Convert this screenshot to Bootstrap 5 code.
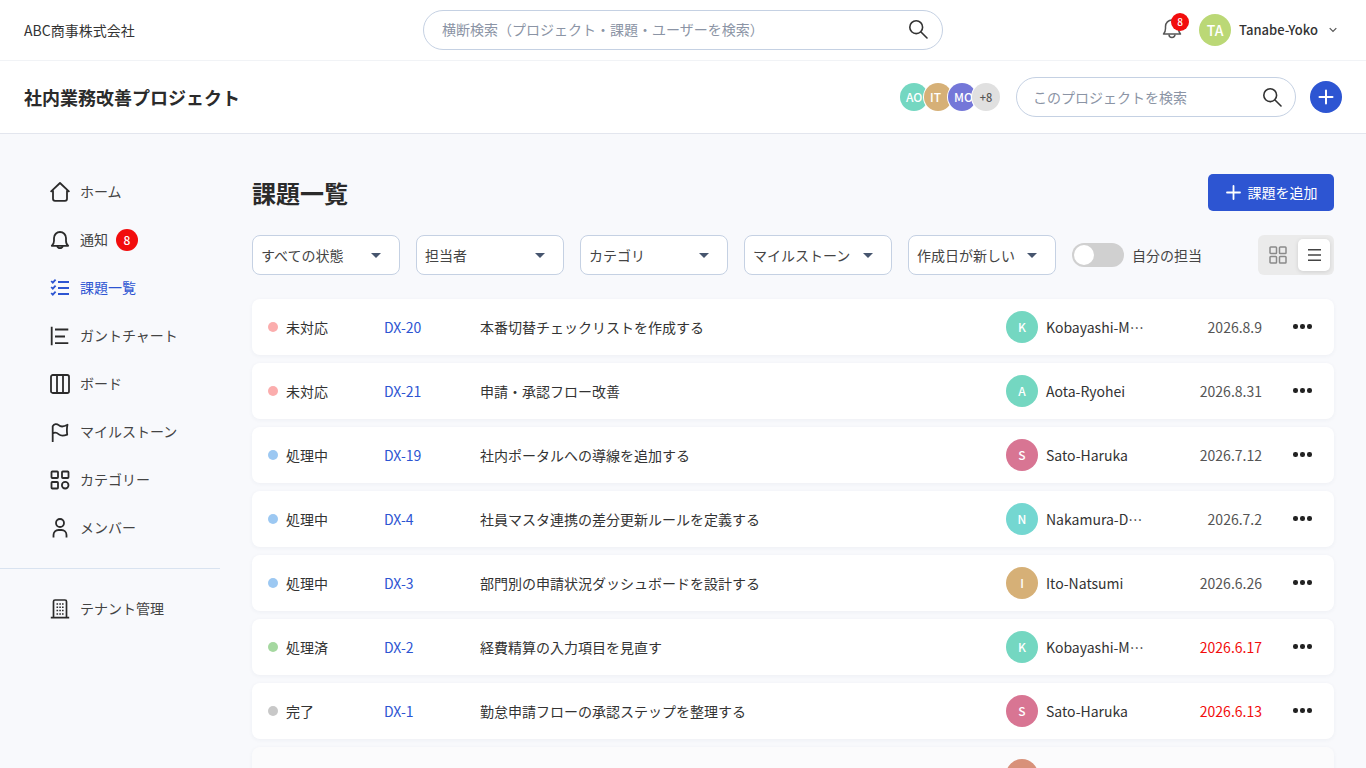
<!DOCTYPE html>
<html lang="ja">
<head>
<meta charset="utf-8">
<title>課題一覧</title>
<link href="https://cdn.jsdelivr.net/npm/bootstrap@5.3.0/dist/css/bootstrap.min.css" rel="stylesheet">
<style>
html,body{height:768px;overflow:hidden}
body{font-family:"Noto Sans CJK JP","Noto Sans",sans-serif;font-size:14px;color:#333;background:#f8f9fc}
svg{display:block;flex:none}
.top-bar{height:61px;padding:0 29px 0 24px;background:#fff;border-bottom:1px solid #f1f3f6}
.org-name{width:399px;color:#333;font-size:14px}
.pill-search{border:1px solid #c5d1e3;border-radius:20px;background:#fff;height:40px;color:#8b94a5}
.global-search{width:520px;padding:0 14px 2px 18px}
.bell-wrap{width:22px;height:24px;margin-right:16px}
.count-dot{position:absolute;left:10px;top:-5.5px;width:18px;height:18px;border-radius:50%;background:#f20d0d;color:#fff;font-size:10px;font-weight:500;line-height:18px;text-align:center}
.avatar-c{border-radius:50%;color:#fff;font-weight:500;display:flex;align-items:center;justify-content:center;flex:none}
.av32{width:32px;height:32px;font-size:14px}
.user-name{margin-left:8px;margin-right:11px;font-size:13px;font-weight:500}
.project-bar{height:73px;padding:0 24px;background:#fff;border-bottom:1px solid #e3e6ee}
.project-title{font-size:18px;font-weight:700;color:#2b2b2b;margin:2px 0 0}
.stack{margin-right:16px}
.stack .avatar-c{width:28px;height:28px;font-size:12px;margin-left:-4px;overflow:hidden;box-shadow:0 0 0 1px #fff;justify-content:flex-start;padding-left:6px}
.stack .avatar-c:first-child{margin-left:0}
.stack .more{background:#e0e0e0;color:#555;justify-content:center;padding:0;font-size:11px}
.project-search{width:280px;padding:0 13px 0 16px}
.round-add{width:32px;height:32px;border-radius:50%;background:#2d55d2;margin-left:14px;border:0;padding:0}
.side-col{width:220px;flex:none;padding-top:33px}
.side-link{height:48px;padding-left:50px;gap:10px;color:#444;text-decoration:none;font-size:14px}
.side-link.on{color:#2d55d2}
.side-link svg{width:20px;height:20px;margin-top:2px}
.side-badge{width:22px;height:22px;border-radius:50%;background:#f20d0d;color:#fff;font-size:12px;font-weight:500;text-align:center;line-height:22px;margin:2px 0 0 -2px}
.side-rule{border-top:1px solid #d9e3f0;margin:17px 0 15px}
.main-col{padding:40px 32px 0;flex:1;min-width:0}
.page-title{font-size:24px;font-weight:700;color:#2b2b2b;margin:0;line-height:38px}
.add-btn{width:126px;height:37px;background:#2d55d2;border:0;color:#fff;border-radius:5px;font-size:14px;padding:0 0 1px 1px;gap:7px}
.filter-bar{margin-top:23px;margin-bottom:24px;height:40px}
.pick{width:148px;height:40px;margin-right:16px;border:1px solid #c5d1e3;border-radius:8px;background:#fff;padding:0 10px 0 8px;font-size:14px;color:#444}
.caret-d{width:0;height:0;border-left:5.5px solid transparent;border-right:5.5px solid transparent;border-top:5.5px solid #46556e;margin-right:8px}
.toggle-sw{width:52px;height:24px;border-radius:12px;background:#d0d0d0;margin-right:8px;padding:2px}
.toggle-sw i{display:block;width:20px;height:20px;border-radius:50%;background:#fff}
.mine-label{font-size:14px;color:#444}
.view-box{width:76px;height:40px;background:#ebebeb;border-radius:6px;padding:4px;margin-left:auto;gap:4px}
.view-btn{width:32px;height:32px;border-radius:5px}
.view-btn.on{background:#fff;box-shadow:0 1px 4px rgba(0,0,0,.12)}
.issue-row{height:56px;margin-bottom:8px;background:#fff;border-radius:8px;box-shadow:0 1px 4px rgba(30,50,90,.05);padding:0 16px;font-size:14px}
.issue-row.faded{background:#fbfbfc}
.st{width:116px;color:#333}
.st i{display:block;width:10px;height:10px;border-radius:50%;margin-right:8px;margin-top:-1px}
.iss-key{width:96px;color:#2d55d2;text-decoration:none}
.iss-title{width:526px;color:#333}
.who{width:180px;color:#333}
.who .avatar-c{width:32px;height:32px;font-size:12px;margin-right:8px}
.when{width:76px;text-align:right;color:#555;flex:none}
.when.late{color:#f20d0d}
.dots{margin-left:31px;gap:2.5px;width:19px;margin-top:-1px}
.dots i{display:block;width:4.5px;height:4.5px;border-radius:50%;background:#222}
</style>
</head>
<body>
<header class="top-bar d-flex align-items-center">
  <div class="org-name">ABC商事株式会社</div>
  <div class="pill-search global-search d-flex align-items-center justify-content-between">
    <span>横断検索（プロジェクト・課題・ユーザーを検索）</span>
    <svg width="20" height="20" viewBox="0 0 20 20" fill="none" stroke="#333" stroke-width="1.6"><circle cx="8.2" cy="8.2" r="6.4"/><path d="M13 13l6 6" stroke-linecap="round"/></svg>
  </div>
  <div class="ms-auto d-flex align-items-center">
    <div class="bell-wrap position-relative">
      <svg width="22" height="24" viewBox="0 2 22 24" fill="none" stroke="#555" stroke-width="1.5"><path d="M2.500 18c1.600-1.400 2-3 2-5.500v-2a6.500 6.500 0 0 1 13 0v2c0 2.500.4 4.100 2 5.500z" stroke-linejoin="round"/><path d="M8 18.500a3 3 0 0 0 6 0"/></svg>
      <span class="count-dot">8</span>
    </div>
    <div class="avatar-c av32" style="background:#bbd876">TA</div>
    <span class="user-name">Tanabe-Yoko</span>
    <svg width="8" height="6" viewBox="0 0 8 6" fill="none" stroke="#555" stroke-width="1.2"><path d="M.7 1.200L4 4.500l3.300-3.300"/></svg>
  </div>
</header>
<section class="project-bar d-flex align-items-center justify-content-between">
  <h1 class="project-title">社内業務改善プロジェクト</h1>
  <div class="d-flex align-items-center">
    <div class="stack d-flex align-items-center">
      <div class="avatar-c" style="background:#74d7c1">AO</div>
      <div class="avatar-c" style="background:#d6b077">IT</div>
      <div class="avatar-c" style="background:#7477d8">MO</div>
      <div class="avatar-c more">+8</div>
    </div>
    <div class="pill-search project-search d-flex align-items-center justify-content-between">
      <span>このプロジェクトを検索</span>
      <svg width="20" height="20" viewBox="0 0 20 20" fill="none" stroke="#333" stroke-width="1.6"><circle cx="8.2" cy="8.2" r="6.4"/><path d="M13 13l6 6" stroke-linecap="round"/></svg>
    </div>
    <button class="round-add d-flex align-items-center justify-content-center" aria-label="追加">
      <svg width="16" height="16" viewBox="0 0 16 16" stroke="#fff" stroke-width="2" stroke-linecap="round"><path d="M8 1.500v13M1.500 8h13"/></svg>
    </button>
  </div>
</section>
<div class="d-flex">
  <nav class="side-col">
    <a class="side-link d-flex align-items-center" href="#"><svg viewBox="0 0 20 20" fill="none" stroke="#2b2b2b" stroke-width="1.800" stroke-linejoin="round"><path d="M.6 9.800L10 1l9.400 8.800M3 8.500v8.300a2 2 0 0 0 2 2h10a2 2 0 0 0 2-2V8.500"/></svg>ホーム</a>
    <a class="side-link d-flex align-items-center" href="#"><svg viewBox="0 0 20 20" fill="none" stroke="#2b2b2b" stroke-width="1.800" stroke-linejoin="round"><path d="M1.800 15.800c1.500-1 2.200-2.700 2.200-5V8a6 6 0 0 1 12 0v2.800c0 2.300.7 4 2.200 5z"/><path d="M7.200 16a2.900 2.900 0 0 0 5.600 0"/></svg>通知<span class="side-badge">8</span></a>
    <a class="side-link on d-flex align-items-center" href="#"><svg viewBox="0 0 20 20" fill="none" stroke="#2d55d2" stroke-width="1.800"><path d="M8 4h11M8 10h11M8 16h11"/><path d="M1.200 3l1.600 1.700L5.600 1.700M1.200 9l1.600 1.700 2.800-3M1.200 15l1.600 1.700 2.800-3"/></svg>課題一覧</a>
    <a class="side-link d-flex align-items-center" href="#"><svg viewBox="0 0 20 20" fill="none" stroke="#2b2b2b" stroke-width="1.800"><path d="M1.700.8v18.400M5 3.500h13.300M5 10.500h10M5 17.200h13.300"/></svg>ガントチャート</a>
    <a class="side-link d-flex align-items-center" href="#"><svg viewBox="0 0 20 20" fill="none" stroke="#2b2b2b" stroke-width="1.800"><rect x="1" y="1" width="18" height="18" rx="1.800"/><path d="M7 1v18M13 1v18"/></svg>ボード</a>
    <a class="side-link d-flex align-items-center" href="#"><svg viewBox="0 0 20 20" fill="none" stroke="#2b2b2b" stroke-width="1.800" stroke-linejoin="round" stroke-linecap="round"><path d="M2.700 19.500V4.200c1.500-2.500 4-2.800 6-1s4 2.200 8.800-.4c-.8 3-.8 6-.3 9.800-4 1.500-6 1.800-8.300-.2s-4.200-2.400-6.200-.8"/></svg>マイルストーン</a>
    <a class="side-link d-flex align-items-center" href="#"><svg viewBox="0 0 20 20" fill="none" stroke="#2b2b2b" stroke-width="1.800"><rect x="1.500" y="1.500" width="6.500" height="6.500" rx=".8"/><rect x="12" y="1.500" width="6.500" height="6.500" rx=".8"/><rect x="1.500" y="12" width="6.500" height="6.500" rx=".8"/><circle cx="15.200" cy="15.200" r="3.300"/></svg>カテゴリー</a>
    <a class="side-link d-flex align-items-center" href="#"><svg viewBox="0 0 20 20" fill="none" stroke="#2b2b2b" stroke-width="1.800"><circle cx="10" cy="5" r="4"/><path d="M3.500 19.500v-2.500a5 5 0 0 1 5-5h3a5 5 0 0 1 5 5v2.500"/></svg>メンバー</a>
    <div class="side-rule"></div>
    <a class="side-link d-flex align-items-center" href="#"><svg viewBox="0 0 20 20" fill="none" stroke="#2b2b2b" stroke-width="1.700"><path d="M3.500 18.500V2.500a1.500 1.500 0 0 1 1.500-1.500h10a1.500 1.500 0 0 1 1.500 1.500v16M.8 18.700h18.400"/><path d="M6.500 5h1.600M9.300 5h1.600M12 5h1.600M6.500 8.300h1.600M9.300 8.300h1.600M12 8.300h1.600M6.500 11.600h1.600M9.300 11.600h1.600M12 11.600h1.600M6.500 14.900h1.600M9.300 14.900h1.600M12 14.900h1.600" stroke-width="1.500"/></svg>テナント管理</a>
  </nav>
  <main class="main-col">
    <div class="d-flex justify-content-between align-items-start">
      <h2 class="page-title">課題一覧</h2>
      <button class="add-btn btn d-flex align-items-center justify-content-center">
        <svg width="15" height="15" viewBox="0 0 15 15" stroke="#fff" stroke-width="1.800" stroke-linecap="round"><path d="M7.500 1v13M1 7.500h13"/></svg>課題を追加
      </button>
    </div>
    <div class="filter-bar d-flex align-items-center">
      <div class="pick d-flex align-items-center justify-content-between"><span>すべての状態</span><i class="caret-d"></i></div>
      <div class="pick d-flex align-items-center justify-content-between"><span>担当者</span><i class="caret-d"></i></div>
      <div class="pick d-flex align-items-center justify-content-between"><span>カテゴリ</span><i class="caret-d"></i></div>
      <div class="pick d-flex align-items-center justify-content-between"><span>マイルストーン</span><i class="caret-d"></i></div>
      <div class="pick d-flex align-items-center justify-content-between"><span>作成日が新しい</span><i class="caret-d"></i></div>
      <div class="toggle-sw"><i></i></div>
      <span class="mine-label">自分の担当</span>
      <div class="view-box d-flex">
        <div class="view-btn d-flex align-items-center justify-content-center"><svg width="18" height="18" viewBox="0 0 18 18" fill="none" stroke="#8a8a8a" stroke-width="1.500"><rect x="1" y="1" width="6.500" height="6.500" rx=".8"/><rect x="10.500" y="1" width="6.500" height="6.500" rx=".8"/><rect x="1" y="10.500" width="6.500" height="6.500" rx=".8"/><rect x="10.500" y="10.500" width="6.500" height="6.500" rx=".8"/></svg></div>
        <div class="view-btn on d-flex align-items-center justify-content-center"><svg width="14" height="14" viewBox="0 0 14 14" stroke="#444" stroke-width="1.600"><path d="M1 1.800h13M1 7h13M1 12.200h13"/></svg></div>
      </div>
    </div>
    <div>
      <div class="issue-row d-flex align-items-center"><div class="st d-flex align-items-center"><i style="background:#fbadad"></i>未対応</div><a class="iss-key" href="#">DX-20</a><div class="iss-title">本番切替チェックリストを作成する</div><div class="who d-flex align-items-center"><div class="avatar-c" style="background:#74d7c1">K</div>Kobayashi-M…</div><div class="when">2026.8.9</div><div class="dots d-flex"><i></i><i></i><i></i></div></div>
      <div class="issue-row d-flex align-items-center"><div class="st d-flex align-items-center"><i style="background:#fbadad"></i>未対応</div><a class="iss-key" href="#">DX-21</a><div class="iss-title">申請・承認フロー改善</div><div class="who d-flex align-items-center"><div class="avatar-c" style="background:#74d7c1">A</div>Aota-Ryohei</div><div class="when">2026.8.31</div><div class="dots d-flex"><i></i><i></i><i></i></div></div>
      <div class="issue-row d-flex align-items-center"><div class="st d-flex align-items-center"><i style="background:#9cc8f2"></i>処理中</div><a class="iss-key" href="#">DX-19</a><div class="iss-title">社内ポータルへの導線を追加する</div><div class="who d-flex align-items-center"><div class="avatar-c" style="background:#d87593">S</div>Sato-Haruka</div><div class="when">2026.7.12</div><div class="dots d-flex"><i></i><i></i><i></i></div></div>
      <div class="issue-row d-flex align-items-center"><div class="st d-flex align-items-center"><i style="background:#9cc8f2"></i>処理中</div><a class="iss-key" href="#">DX-4</a><div class="iss-title">社員マスタ連携の差分更新ルールを定義する</div><div class="who d-flex align-items-center"><div class="avatar-c" style="background:#74d7d1">N</div>Nakamura-D…</div><div class="when">2026.7.2</div><div class="dots d-flex"><i></i><i></i><i></i></div></div>
      <div class="issue-row d-flex align-items-center"><div class="st d-flex align-items-center"><i style="background:#9cc8f2"></i>処理中</div><a class="iss-key" href="#">DX-3</a><div class="iss-title">部門別の申請状況ダッシュボードを設計する</div><div class="who d-flex align-items-center"><div class="avatar-c" style="background:#d6b077">I</div>Ito-Natsumi</div><div class="when">2026.6.26</div><div class="dots d-flex"><i></i><i></i><i></i></div></div>
      <div class="issue-row d-flex align-items-center"><div class="st d-flex align-items-center"><i style="background:#a5d8a0"></i>処理済</div><a class="iss-key" href="#">DX-2</a><div class="iss-title">経費精算の入力項目を見直す</div><div class="who d-flex align-items-center"><div class="avatar-c" style="background:#74d7c1">K</div>Kobayashi-M…</div><div class="when late">2026.6.17</div><div class="dots d-flex"><i></i><i></i><i></i></div></div>
      <div class="issue-row d-flex align-items-center"><div class="st d-flex align-items-center"><i style="background:#c8c8c8"></i>完了</div><a class="iss-key" href="#">DX-1</a><div class="iss-title">勤怠申請フローの承認ステップを整理する</div><div class="who d-flex align-items-center"><div class="avatar-c" style="background:#d87593">S</div>Sato-Haruka</div><div class="when late">2026.6.13</div><div class="dots d-flex"><i></i><i></i><i></i></div></div>
      <div class="issue-row faded d-flex align-items-center"><div class="st"></div><div class="iss-key"></div><div class="iss-title"></div><div class="who d-flex align-items-center"><div class="avatar-c" style="background:#d8917a"></div></div></div>
    </div>
  </main>
</div>
<script src="https://cdn.jsdelivr.net/npm/bootstrap@5.3.0/dist/js/bootstrap.bundle.min.js"></script>
</body>
</html>
